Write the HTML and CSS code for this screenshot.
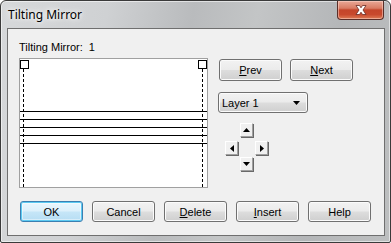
FILE: index.html
```html
<!DOCTYPE html>
<html>
<head>
<meta charset="utf-8">
<link rel="stylesheet" href="styles.css">
</head>
<body>
<div class="window">
  <div class="titlebar">
    <span class="title">Tilting Mirror</span>
    <div class="close">
      <svg width="16" height="12" viewBox="0 0 16 12"><path d="M3 1.5 L6.5 1.5 L8 3.8 L9.5 1.5 L13 1.5 L10 6 L13 10.5 L9.5 10.5 L8 8.2 L6.5 10.5 L3 10.5 L6 6 Z" fill="#fff" stroke="#6a2a22" stroke-width="0.8"/></svg>
    </div>
  </div>
  <div class="client">
    <div class="label">Tilting Mirror:&nbsp; 1</div>
    <div class="main">
      <div class="canvas">
        <svg width="187" height="128" viewBox="0 0 187 128">
          <rect x="0.5" y="1.5" width="8" height="8" fill="#fff" stroke="#000"/>
          <rect x="178.5" y="1.5" width="8" height="8" fill="#fff" stroke="#000"/>
          <line x1="3.5" y1="10" x2="3.5" y2="128" stroke="#000" stroke-dasharray="3 2"/>
          <line x1="182.5" y1="10" x2="182.5" y2="128" stroke="#000" stroke-dasharray="3 2"/>
          <line x1="0" y1="52.5" x2="187" y2="52.5" stroke="#000"/>
          <line x1="0" y1="60.5" x2="187" y2="60.5" stroke="#000"/>
          <line x1="0" y1="68.5" x2="187" y2="68.5" stroke="#000"/>
          <line x1="0" y1="76.5" x2="187" y2="76.5" stroke="#000"/>
          <line x1="0" y1="84.5" x2="187" y2="84.5" stroke="#000"/>
        </svg>
      </div>
      <div class="side">
        <div class="navrow">
          <div class="btn"><u>P</u>rev</div>
          <div class="btn"><u>N</u>ext</div>
        </div>
        <div class="combo">
          <span>Layer 1</span>
          <svg width="7" height="4" viewBox="0 0 7 4"><path d="M0 0 H7 L3.5 4 Z" fill="#000"/></svg>
        </div>
        <div class="arrows">
          <div class="abtn up"><svg width="7" height="4" viewBox="0 0 7 4"><path d="M3.5 0 L7 4 H0 Z" fill="#000"/></svg></div>
          <div class="abtn left"><svg width="4" height="7" viewBox="0 0 4 7"><path d="M0 3.5 L4 0 V7 Z" fill="#000"/></svg></div>
          <div class="abtn right"><svg width="4" height="7" viewBox="0 0 4 7"><path d="M4 3.5 L0 0 V7 Z" fill="#000"/></svg></div>
          <div class="abtn down"><svg width="7" height="4" viewBox="0 0 7 4"><path d="M0 0 H7 L3.5 4 Z" fill="#000"/></svg></div>
        </div>
      </div>
    </div>
    <div class="actions">
      <div class="btn default">OK</div>
      <div class="btn">Cancel</div>
      <div class="btn"><u>D</u>elete</div>
      <div class="btn"><u>I</u>nsert</div>
      <div class="btn">Help</div>
    </div>
  </div>
</div>
</body>
</html>
```

FILE: styles.css
```css
html, body {
  margin: 0;
  padding: 0;
  background: #fff;
}
.window {
  width: 389px;
  height: 241px;
  border: 1px solid #3a3a3a;
  border-radius: 6px 6px 2px 2px;
  background: linear-gradient(100deg, #d6d8da 0%, #cfd1d3 25%, #b9bbbd 45%, #c3c5c6 60%, #b4b6b8 80%, #bdbfc0 100%);
  box-shadow: inset 0 0 0 1px rgba(255,255,255,0.55);
  display: flex;
  flex-direction: column;
  font-family: "Liberation Sans", Arial, sans-serif;
  font-size: 11px;
  color: #000;
}
.titlebar {
  height: 28px;
  display: flex;
  justify-content: space-between;
  align-items: flex-start;
  padding-left: 7px;
  padding-right: 6px;
}
.title {
  font-family: "Noto Sans", "Open Sans", sans-serif;
  font-size: 12px;
  line-height: 27px;
  color: #000;
  text-shadow: 0 0 8px #fff, 0 0 4px #fff;
}
.close {
  width: 45px;
  height: 18px;
  border: 1px solid #5a2e28;
  border-top: none;
  border-radius: 0 0 4px 4px;
  background: linear-gradient(to bottom, #e9a897 0%, #d97c64 40%, #c4452a 50%, #c8492d 75%, #dd7b55 100%);
  box-shadow: inset 0 0 0 1px rgba(255,220,210,0.5);
  display: flex;
  align-items: center;
  justify-content: center;
}
.client {
  margin: 0 5px 6px 6px;
  height: 205px;
  border: 1px solid #6f6f6f;
  background: #f0f0f0;
  padding: 9px 0 0 11px;
}
.label {
  line-height: 18px;
  height: 18px;
}
.main {
  display: flex;
  margin-top: 2px;
}
.canvas {
  width: 187px;
  height: 128px;
  border: 1px solid #a0a0a0;
  background: #fff;
}
.canvas svg {
  display: block;
}
.side {
  margin-left: 10px;
  padding-top: 1px;
  display: flex;
  flex-direction: column;
}
.navrow {
  display: flex;
  gap: 8px;
  margin-left: 1px;
}
.btn {
  box-sizing: border-box;
  width: 63px;
  height: 22px;
  border: 1px solid #707070;
  border-radius: 3px;
  background: linear-gradient(to bottom, #f2f2f2 0%, #ebebeb 48%, #dddddd 52%, #cfcfcf 100%);
  box-shadow: inset 0 0 0 1px #fbfbfb;
  display: flex;
  align-items: center;
  justify-content: center;
  line-height: 14px;
}
.btn u {
  text-decoration: underline;
}
.btn.default {
  border-color: #3c7fb1;
  background: linear-gradient(to bottom, #eaf6fd 0%, #dcf0fb 48%, #c6e6f8 52%, #b6ddf3 100%);
  box-shadow: inset 0 0 0 1px #5ccaf2, inset 0 0 0 2px rgba(255,255,255,0.45);
}
.combo {
  box-sizing: border-box;
  margin-top: 11px;
  width: 90px;
  height: 21px;
  border: 1px solid #707070;
  border-radius: 3px;
  background: linear-gradient(to bottom, #f2f2f2 0%, #ebebeb 48%, #dddddd 52%, #cfcfcf 100%);
  box-shadow: inset 0 0 0 1px #fbfbfb;
  display: flex;
  align-items: center;
  justify-content: space-between;
  padding: 0 7px 0 3px;
}
.arrows {
  display: grid;
  grid-template-columns: 14px 14px 14px;
  grid-template-rows: 18px 16px 15px;
  column-gap: 1px;
  margin-top: 10px;
  margin-left: 7px;
}
.abtn {
  box-sizing: border-box;
  border: 1px solid;
  border-color: #fff #a0a0a0 #a0a0a0 #fff;
  box-shadow: 1px 1px 0 #696969;
  background: #f0f0f0;
  display: flex;
  align-items: center;
  justify-content: center;
  width: 13px;
  height: 14px;
}
.up { grid-column: 2; grid-row: 1; }
.left { grid-column: 1; grid-row: 2; }
.right { grid-column: 3; grid-row: 2; }
.down { grid-column: 2; grid-row: 3; }
.actions {
  display: flex;
  gap: 9px;
  margin-top: 13px;
  margin-left: 1px;
}
.actions .btn {
  height: 21px;
}
```
